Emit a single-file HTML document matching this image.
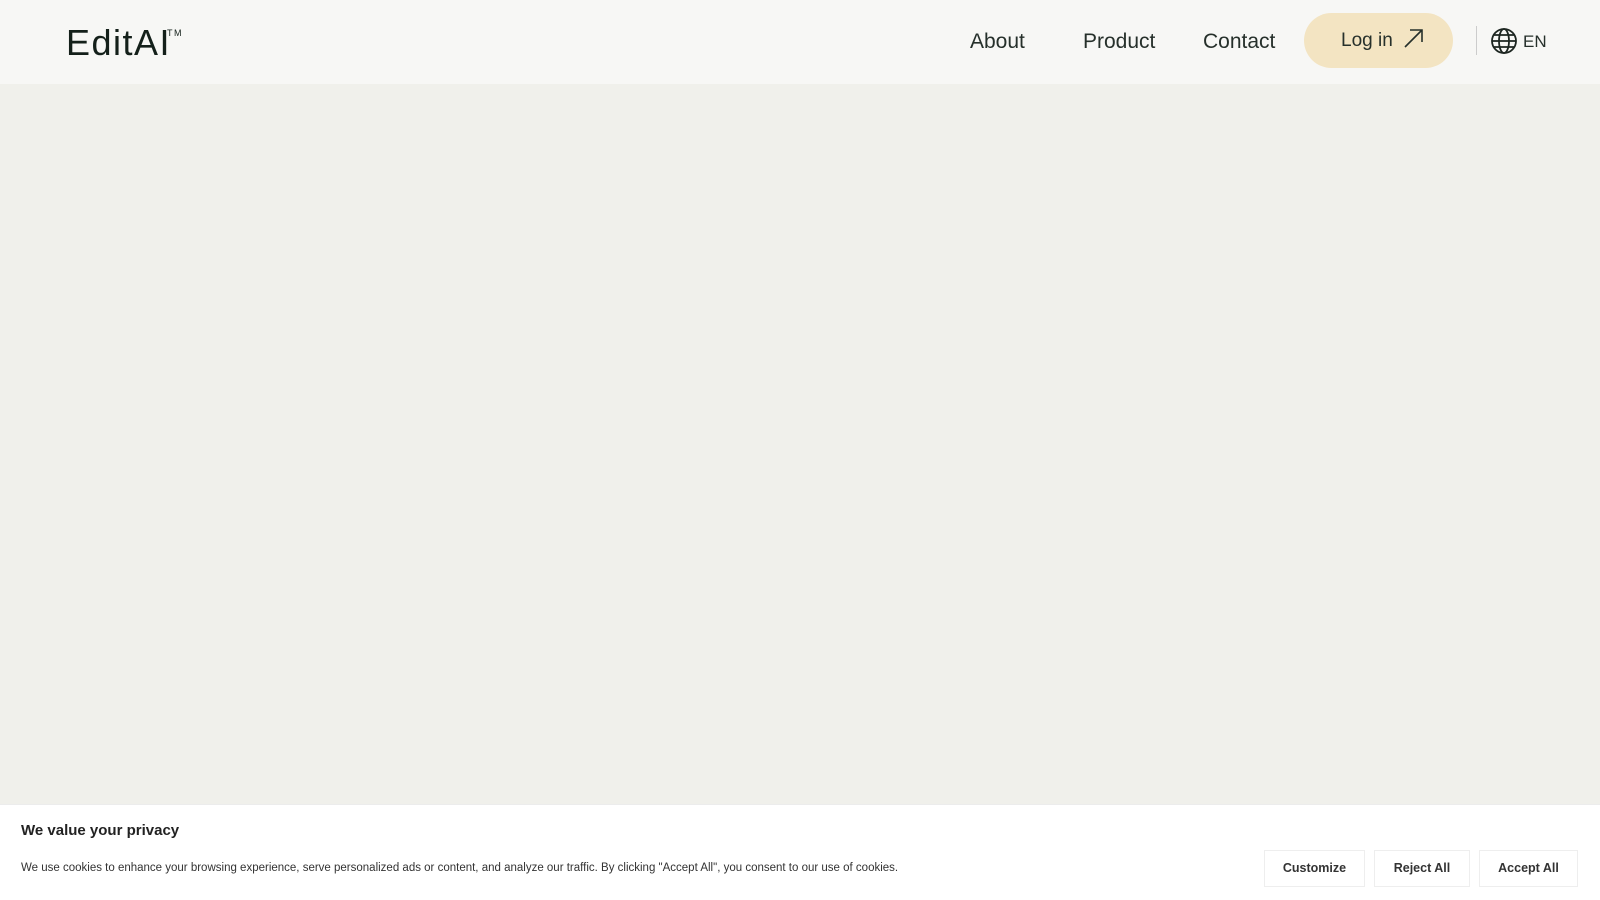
<!DOCTYPE html>
<html><head><style>
*{margin:0;padding:0;box-sizing:border-box}
body{width:1600px;height:900px;background:#f0f0eb;font-family:"Liberation Sans",sans-serif;position:relative;overflow:hidden;color:#1d2621}
.hdr{position:absolute;left:0;top:0;width:1600px;height:84px;background:#f7f7f5}
.logo{position:absolute;left:66px;top:22px;font-size:36px;letter-spacing:1.5px;color:#14201a;font-weight:300}
.logo sup{font-size:9px;position:absolute;top:6px;right:-12px}
.nav{position:absolute;top:30px;font-size:21px;color:#26302b}
.btn{position:absolute;left:1304px;top:13px;width:149px;height:55px;border-radius:28px;background:#f3e4c2;font-size:19px;color:#26302b;line-height:55px;padding-left:37px}
.div{position:absolute;left:1476px;top:26px;width:1px;height:29px;background:#ccc}
.ck{position:absolute;left:0;top:804px;width:1600px;height:96px;background:#fff;border-top:1px solid #ececec}
.ck h3{position:absolute;left:21px;top:17px;font-size:15px;color:#222}
.ck p{position:absolute;left:21px;top:57px;font-size:11.5px;color:#333}
.b{position:absolute;top:45px;height:37px;border:1px solid #eee;font-size:12.5px;font-weight:bold;color:#333;text-align:center;line-height:35px}
</style></head><body>
<div class="hdr">
<div class="logo">EditAI<sup>TM</sup></div>
<div class="nav" style="left:970px">About</div>
<div class="nav" style="left:1083px">Product</div>
<div class="nav" style="left:1203px">Contact</div>
<div class="btn">Log in <svg width="22" height="22" viewBox="0 0 22 22" style="vertical-align:-3px;margin-left:4px"><path d="M3 20L20 3M8 3H20V15" fill="none" stroke="#26302b" stroke-width="1.6"/></svg></div>
<div class="div"></div>
<svg style="position:absolute;left:1490px;top:27px" width="28" height="28" viewBox="0 0 28 28" fill="none" stroke="#1d2621" stroke-width="1.8"><circle cx="14" cy="14" r="12"/><ellipse cx="14" cy="14" rx="5" ry="12"/><path d="M2 14H26M4 8H24M4 20H24"/></svg>
<div class="nav" style="left:1523px;top:32px;font-size:17px">EN</div>
</div>
<div class="ck">
<h3>We value your privacy</h3>
<p>We use cookies to enhance your browsing experience, serve personalized ads or content, and analyze our traffic. By clicking "Accept All", you consent to our use of cookies.</p>
<div class="b" style="left:1264px;width:101px">Customize</div>
<div class="b" style="left:1374px;width:96px">Reject All</div>
<div class="b" style="left:1479px;width:99px">Accept All</div>
</div>
</body></html>
